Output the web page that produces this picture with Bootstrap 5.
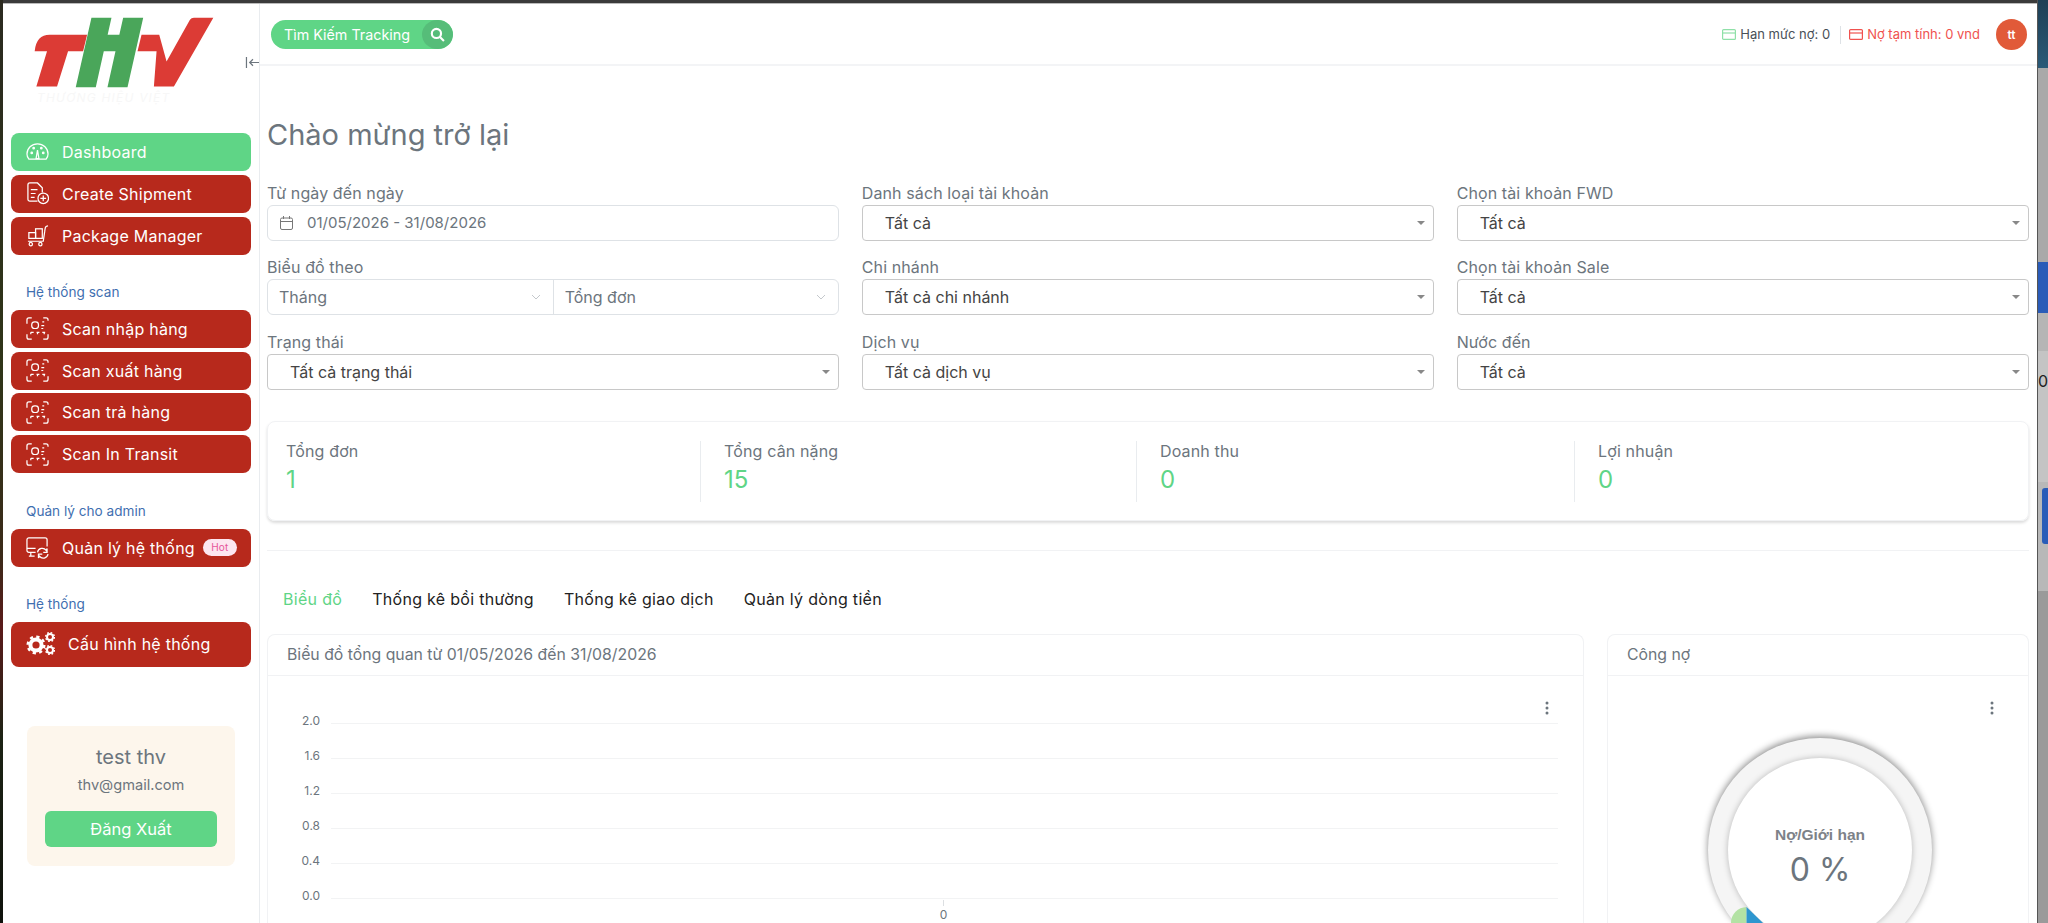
<!DOCTYPE html>
<html lang="vi">
<head>
<meta charset="UTF-8">
<title>THV Dashboard</title>
<link href="https://cdn.jsdelivr.net/npm/bootstrap@5.3.0/dist/css/bootstrap.min.css" rel="stylesheet">
<style>
  html, body { height: 923px; overflow: hidden; }
  body { font-family: Inter, "Noto Sans", sans-serif; background: #3b3b3b; color: #6c757d; font-size: 16px; display: flex; }
  .desk-left { width: 3px; flex: none; background: linear-gradient(#2b2a20, #2f3518 40%, #3a2a18 60%, #5a1a1a 68%, #1c2314 80%, #0f120c); }
  .win-col { flex: 1; min-width: 0; display: flex; flex-direction: column; height: 923px; border-right: 1px solid #555; }
  .win-top { height: 4px; flex: none; background: #3b3b3b; border-bottom: 1px solid #bbb; }
  .win-row { flex: 1; display: flex; min-height: 0; }
  .desk-right { width: 10px; flex: none; display: flex; flex-direction: column; overflow: hidden; font-size: 16px; color: #222; }
  .scene-a { height: 68px; background: linear-gradient(#1f3f55, #2a5a78); }
  .scene-b { height: 194px; background: #a9a9a9; }
  .scene-c { height: 51px; background: #2a5cb8; }
  .scene-d { height: 38px; background: #b5b5b5; }
  .scene-e { height: 131px; background: #c4c4c4; line-height: 60px; padding-top: 0; }
  .scene-f { height: 109px; background: #b8b8b8; padding: 6px 0 0 4px; }
  .scene-f i { display: block; height: 56px; background: #2a5cb8; border-radius: 3px 0 0 3px; }
  .scene-g { flex: 1; background: #9a9a9a; }

  .sidebar-side { width: 257px; flex: none; background: #fff; border-right: 1px solid #e9ecef; padding: 0 8px; position: relative; }
  .main-side { flex: 1; background: #fff; min-width: 0; overflow: hidden; }
  .logo-box { height: 129px; padding: 13px 0 0 22px; }
  .logo-box svg { display: block; }
  .logo-sub { font-size: 12px; font-style: italic; color: #f7f7f7; letter-spacing: 1.2px; padding: 3px 0 0 4px; line-height: 14px; }
  .collapse-mark { position: absolute; left: 242px; top: 52px; width: 15px; height: 13px; }
  .side-item { height: 38px; border-radius: 8px; background: #b7291c; color: #fff; display: flex; align-items: center; padding-left: 15px; gap: 13px; margin-bottom: 3.8px; font-size: 16px; font-weight: 400; letter-spacing: .25px; }
  .side-item.on { background: #5fd586; }
  .side-item svg { flex: none; }
  .side-item.tall { height: 45px; }
  .side-head { color: #3f6fb0; font-size: 13.6px; font-weight: 400; padding-left: 15px; line-height: 16px; margin: 29.3px 0 10px; }
  .hot-tag { background: #fde6f0; color: #e6559b; font-size: 10px; border-radius: 9px; width: 34px; text-align: center; line-height: 17px; font-weight: 400; margin-left: -5px; }
  .user-box { background: #fdf6ec; border-radius: 8px; margin: 59px 16px 0; height: 140px; padding: 20px 18px 0; text-align: center; }
  .user-name { font-size: 20px; font-weight: 400; color: #6c757d; line-height: 22px; }
  .user-mail { font-size: 14.6px; margin-top: 8px; line-height: 18px; }
  .logout-btn { background: #5fd586; color: #fff; height: 36px; border-radius: 6px; margin-top: 17px; display: flex; align-items: center; justify-content: center; font-size: 16.5px; font-weight: 400; }

  .top-strip { height: 62px; border-bottom: 2px solid #f3f4f6; display: flex; align-items: center; justify-content: space-between; padding: 1px 10px 0 11px; }
  .track-pill { background: #5fd586; color: #fff; border-radius: 15px; width: 182px; height: 29px; display: flex; justify-content: space-between; align-items: center; font-size: 14.3px; padding-left: 13px; overflow: hidden; }
  .track-go { width: 31px; height: 29px; border-radius: 50%; background: #56bd79; display: flex; align-items: center; justify-content: center; }
  .debt-txt { font-size: 13px; color: #495057; display: flex; align-items: center; gap: 4px; }
  .debt-txt.bad { color: #f0524f; }
  .debt-sep { width: 1px; height: 18px; background: #dee2e6; margin: 0 8px 0 10px; }
  .avatar-dot { width: 31px; height: 31px; border-radius: 50%; background: #e15a39; color: #fff; font-size: 12px; font-weight: 600; display: flex; align-items: center; justify-content: center; margin-left: 16px; }

  .page-body { padding: 0 8px 0 7px; }
  .hello-title { font-size: 29px; font-weight: 400; color: #6c757d; margin: 0; padding-top: 50px; height: 117px; line-height: 38px; }
  .filter-grid { display: grid; grid-template-columns: repeat(3, 1fr); column-gap: 22.5px; }
  .filter-cell { height: 74.3px; }
  .filter-label { font-size: 16px; letter-spacing: .1px; line-height: 20px; height: 22px; color: #6c757d; display: block; }
  .date-box { border: 1px solid #dee2e6; border-radius: 6px; height: 36px; display: flex; align-items: center; padding-left: 12px; gap: 14px; font-size: 15px; }
  .pair-box { border: 1px solid #dee2e6; border-radius: 6px; height: 36px; display: flex; }
  .pair-box > div { flex: 1; display: flex; justify-content: space-between; align-items: center; padding: 0 12px 0 11px; }
  .pair-box > div + div { border-left: 1px solid #dee2e6; }
  .pick-box { border: 1px solid #c8c8c8; border-radius: 4px; height: 36px; display: flex; align-items: center; justify-content: space-between; padding: 0 8px 0 22px; color: #444; }
  .pick-box::after { content: ""; border-left: 4px solid transparent; border-right: 4px solid transparent; border-top: 4px solid #888; }

  .stat-panel { border: 1px solid #f1f2f4; border-radius: 8px; height: 100px; margin-top: 15px; box-shadow: 0 2px 3px rgba(0,0,0,.14); padding: 19px 0 0; display: grid; grid-template-columns: 432px 436px 438px 1fr; }
  .stat-cell { height: 61px; padding-left: 23px; border-left: 1px solid #e9ecef; }
  .stat-cell:first-child { border-left: 0; padding-left: 18px; }
  .stat-name { line-height: 20px; letter-spacing: .15px; }
  .stat-num { font-size: 24px; line-height: 32px; color: #5fd586; margin-top: 3px; }
  .soft-rule { border-top: 1px solid #f1f2f4; margin-top: 29px; height: 39px; }
  .tab-row { display: flex; gap: 30px; padding-left: 16px; line-height: 20px; letter-spacing: .3px; color: #222; height: 45px; }
  .tab-row .on { color: #5fd586; }
  .chart-row { display: flex; gap: 23px; }
  .panel-box { border: 1px solid #f1f2f4; border-bottom: 0; border-radius: 8px 8px 0 0; height: 289px; background: #fff; overflow: hidden; }
  .panel-head { height: 41px; border-bottom: 1px solid #f1f2f4; display: flex; align-items: center; padding-left: 19px; font-size: 15.8px; }
  .panel-left { width: 1317px; flex: none; }
  .panel-right { flex: 1; }
  .plot-box { position: relative; }
  .plot-svg { display: block; }
  .plot-svg text { font-size: 12px; fill: #6c757d; font-family: Inter, sans-serif; }
  .dots-mark { position: absolute; right: 34px; top: 25px; }
  .ring-wrap { position: absolute; left: 100px; top: 62px; width: 224px; height: 224px; border-radius: 50%; background: #f5f5f5; box-shadow: 0 -2px 7px rgba(0,0,0,.45); }
  .ring-core { position: absolute; inset: 20px; border-radius: 50%; background: #fff; box-shadow: 0 0 6px rgba(0,0,0,.25); text-align: center; color: #6c757d; }
  .ring-label { font-family: "Liberation Sans", sans-serif; font-weight: 700; font-size: 15.5px; margin-top: 67px; line-height: 20px; color: #7d8288; }
  .ring-val { font-size: 32px; line-height: 40px; margin-top: 5px; }
  .ring-bits { position: absolute; left: 0; top: 0; }
</style>
</head>
<body>
<svg class="d-none">
  <symbol id="scan-ic" viewBox="0 0 24 24"><path fill="none" stroke="#fff" stroke-width="1.3" d="M1 7V3a2 2 0 0 1 2-2h3M18 1h3a2 2 0 0 1 2 2v1M1 18v3a2 2 0 0 0 2 2h3M23 18v3a2 2 0 0 1-2 2h-3M5 16h3M11 16h3M17 16h3M5 16v2M12 16v2M19 16v2M17 5h2M16 9h3M16 12h2"/><rect x="6" y="5" width="7" height="7" rx="3" fill="none" stroke="#fff" stroke-width="1.3"/></symbol>
  <symbol id="card-ic" viewBox="0 0 14 11"><rect x=".6" y=".6" width="12.8" height="9.8" rx="1" fill="none" stroke="currentColor" stroke-width="1.2"/><path d="M.6 4h12.8" fill="none" stroke="currentColor" stroke-width="1.2"/></symbol>
  <symbol id="dots-ic" viewBox="0 0 4 14"><circle cx="2" cy="2" r="1.5" fill="#6c757d"/><circle cx="2" cy="7" r="1.5" fill="#6c757d"/><circle cx="2" cy="12" r="1.5" fill="#6c757d"/></symbol>
  <symbol id="chev-ic" viewBox="0 0 10 6"><path d="M1 1l4 4 4-4" fill="none" stroke="#c4c8cc"/></symbol>
</svg>
<div class="desk-left"></div>
<div class="win-col">
  <div class="win-top"></div>
  <div class="win-row">
    <aside class="sidebar-side">
      <div class="logo-box">
        <svg width="182" height="71" viewBox="100 50 545 212">
          <path d="M105 152Q110 103 150 103L262 103L250 152L205 152L172 258L110 258L142 152Z" fill="#dc3b35"/>
          <path d="M425 103L478 103L500 183L570 58Q574 52 582 52L640 52L522 258L462 258L470 152L413 152Z" fill="#dc3b35"/>
          <path d="M275 52H335L323.500 103H358.500L370 52H430L383 260H323L347 152H312L288 260H228Z" fill="#4aa65a"/>
        </svg>
        <div class="logo-sub">THƯƠNG HIỆU VIỆT</div>
      </div>
      <svg class="collapse-mark" viewBox="0 0 16 14" fill="none" stroke="#6c757d" stroke-width="1.3"><path d="M1.500 1v12M15 7H5M8.500 3.500 5 7l3.500 3.500"/></svg>
      <div class="side-item on">
        <svg width="23" height="20" viewBox="0 0 24 20" fill="none" stroke="#fff" stroke-width="1.3"><path d="M3 17.500C1.500 15.500 1 13.500 1 12a11 10.500 0 0 1 22 0c0 1.500-.5 3.500-2 5.500Z"/><path d="M12 8l-1.500 9h3Z"/><circle cx="6" cy="11" r=".8"/><circle cx="8" cy="6" r=".8"/><circle cx="16" cy="6" r=".8"/><circle cx="18" cy="11" r=".8"/></svg>
        <span>Dashboard</span>
      </div>
      <div class="side-item">
        <svg width="23" height="23" viewBox="0 0 24 24" fill="none" stroke="#fff" stroke-width="1.3"><path d="M12 20H4a2 2 0 0 1-2-2V3a2 2 0 0 1 2-2h8l5 5v5"/><path d="M5 8h7M5 12h5M5 16h4"/><circle cx="18" cy="17" r="5.500"/><path d="M18 14v6M15 17h6"/></svg>
        <span>Create Shipment</span>
      </div>
      <div class="side-item">
        <svg width="23" height="23" viewBox="0 0 24 24" fill="none" stroke="#fff" stroke-width="1.3"><path d="M23 2c-3 0-3 2-3.500 6L18 18H2"/><rect x="3" y="9" width="7" height="6"/><rect x="10" y="5" width="7" height="10"/><circle cx="5" cy="21" r="1.700"/><circle cx="15" cy="21" r="1.700"/></svg>
        <span>Package Manager</span>
      </div>
      <div class="side-head">Hệ thống scan</div>
      <div class="side-item"><svg width="23" height="23"><use href="#scan-ic"/></svg><span>Scan nhập hàng</span></div>
      <div class="side-item"><svg width="23" height="23"><use href="#scan-ic"/></svg><span>Scan xuất hàng</span></div>
      <div class="side-item"><svg width="23" height="23"><use href="#scan-ic"/></svg><span>Scan trả hàng</span></div>
      <div class="side-item"><svg width="23" height="23"><use href="#scan-ic"/></svg><span>Scan In Transit</span></div>
      <div class="side-head">Quản lý cho admin</div>
      <div class="side-item"><svg width="23" height="23" viewBox="0 0 24 24" fill="none" stroke="#fff" stroke-width="1.3"><path d="M10 17H3a2 2 0 0 1-2-2V4a2 2 0 0 1 2-2h17a2 2 0 0 1 2 2v7"/><path d="M5 17v4M3 21h6M1 13h9"/><path d="M12 17a5 5 0 0 1 9-2l1-2v4h-4M23 19a5 5 0 0 1-9 2l-1 2v-4h4"/></svg><span>Quản lý hệ thống</span><span class="hot-tag">Hot</span></div>
      <div class="side-head">Hệ thống</div>
      <div class="side-item tall">
        <svg width="29" height="24" viewBox="0 0 29 24" fill="none" stroke="#fff">
          <circle cx="10" cy="13" r="5.600" stroke-width="4"/><circle cx="10" cy="13" r="8.300" stroke-width="2.400" stroke-dasharray="3.250 3.270"/>
          <circle cx="24" cy="5" r="3" stroke-width="2"/><circle cx="24" cy="5" r="4.400" stroke-width="1.400" stroke-dasharray="1.700 1.760"/>
          <circle cx="24" cy="18" r="3" stroke-width="2"/><circle cx="24" cy="18" r="4.400" stroke-width="1.400" stroke-dasharray="1.700 1.760"/>
        </svg>
        <span>Cấu hình hệ thống</span>
      </div>
      <div class="user-box">
        <div class="user-name">test thv</div>
        <div class="user-mail">thv@gmail.com</div>
        <div class="logout-btn">Đăng Xuất</div>
      </div>
    </aside>
    <main class="main-side">
      <div class="top-strip">
        <div class="track-pill"><span>Tìm Kiếm Tracking</span><span class="track-go"><svg width="15" height="15" viewBox="0 0 14 14" fill="none" stroke="#fff" stroke-width="2"><circle cx="6" cy="6" r="4.300"/><path d="M9.500 9.500 13 13"/></svg></span></div>
        <div class="d-flex align-items-center">
          <span class="debt-txt"><svg width="14" height="11" color="#8fe0a8"><use href="#card-ic"/></svg>Hạn mức nợ: 0</span>
          <span class="debt-sep"></span>
          <span class="debt-txt bad"><svg width="14" height="11" color="#f0524f"><use href="#card-ic"/></svg>Nợ tạm tính: 0 vnd</span>
          <span class="avatar-dot">tt</span>
        </div>
      </div>
      <div class="page-body">
        <h1 class="hello-title">Chào mừng trở lại</h1>
        <div class="filter-grid">
          <div class="filter-cell"><label class="filter-label">Từ ngày đến ngày</label>
            <div class="date-box"><svg width="13" height="14" viewBox="0 0 13 14" fill="none" stroke="#777"><rect x=".5" y="2" width="12" height="11.500" rx="1.500"/><path d="M.5 5.500h12M3.500 0v3M9.500 0v3"/></svg>01/05/2026 - 31/08/2026</div></div>
          <div class="filter-cell"><label class="filter-label">Danh sách loại tài khoản</label><div class="pick-box">Tất cả</div></div>
          <div class="filter-cell"><label class="filter-label">Chọn tài khoản FWD</label><div class="pick-box">Tất cả</div></div>
          <div class="filter-cell"><label class="filter-label">Biểu đồ theo</label>
            <div class="pair-box"><div>Tháng<svg width="10" height="6"><use href="#chev-ic"/></svg></div><div>Tổng đơn<svg width="10" height="6"><use href="#chev-ic"/></svg></div></div></div>
          <div class="filter-cell"><label class="filter-label">Chi nhánh</label><div class="pick-box">Tất cả chi nhánh</div></div>
          <div class="filter-cell"><label class="filter-label">Chọn tài khoản Sale</label><div class="pick-box">Tất cả</div></div>
          <div class="filter-cell"><label class="filter-label">Trạng thái</label><div class="pick-box">Tất cả trạng thái</div></div>
          <div class="filter-cell"><label class="filter-label">Dịch vụ</label><div class="pick-box">Tất cả dịch vụ</div></div>
          <div class="filter-cell"><label class="filter-label">Nước đến</label><div class="pick-box">Tất cả</div></div>
        </div>
        <div class="stat-panel">
          <div class="stat-cell"><div class="stat-name">Tổng đơn</div><div class="stat-num">1</div></div>
          <div class="stat-cell"><div class="stat-name">Tổng cân nặng</div><div class="stat-num">15</div></div>
          <div class="stat-cell"><div class="stat-name">Doanh thu</div><div class="stat-num">0</div></div>
          <div class="stat-cell"><div class="stat-name">Lợi nhuận</div><div class="stat-num">0</div></div>
        </div>
        <div class="soft-rule"></div>
        <div class="tab-row"><span class="on">Biểu đồ</span><span>Thống kê bồi thường</span><span>Thống kê giao dịch</span><span>Quản lý dòng tiền</span></div>
        <div class="chart-row">
          <div class="panel-box panel-left">
            <div class="panel-head">Biểu đồ tổng quan từ 01/05/2026 đến 31/08/2026</div>
            <div class="plot-box">
              <svg class="dots-mark" width="4" height="14"><use href="#dots-ic"/></svg>
              <svg class="plot-svg" width="1315" height="247" viewBox="0 0 1315 247">
                <g stroke="#f2f3f4">
                  <path d="M63 47.500H1290M63 82.500H1290M63 117.500H1290M63 152.500H1290M63 187.500H1290M63 222.500H1290"/>
                  <path d="M675.500 224V230" stroke="#dcdfe2"/>
                </g>
                <g text-anchor="end">
                  <text x="52" y="49">2.0</text><text x="52" y="84">1.6</text><text x="52" y="119">1.2</text>
                  <text x="52" y="154">0.8</text><text x="52" y="189">0.4</text><text x="52" y="224">0.0</text>
                </g>
                <text x="675.500" y="243" text-anchor="middle">0</text>
              </svg>
            </div>
          </div>
          <div class="panel-box panel-right">
            <div class="panel-head">Công nợ</div>
            <div class="plot-box">
              <svg class="dots-mark" width="4" height="14"><use href="#dots-ic"/></svg>
              <div class="ring-wrap">
                <div class="ring-core"><div class="ring-label">Nợ/Giới hạn</div><div class="ring-val">0 %</div></div>
                <svg class="ring-bits" width="224" height="224" viewBox="0 0 224 224">
                  <path d="M38.500 169A16 16 0 0 0 23 185H38.500Z" fill="#b3e2a4"/>
                  <path d="M38.500 169L55 185H38.500Z" fill="#2e96cf"/>
                </svg>
              </div>
            </div>
          </div>
        </div>
      </div>
    </main>
  </div>
</div>
<div class="desk-right">
  <div class="scene-a"></div><div class="scene-b"></div><div class="scene-c"></div><div class="scene-d"></div>
  <div class="scene-e">0</div>
  <div class="scene-f"><i></i></div><div class="scene-g"></div>
</div>
</body>
</html>
